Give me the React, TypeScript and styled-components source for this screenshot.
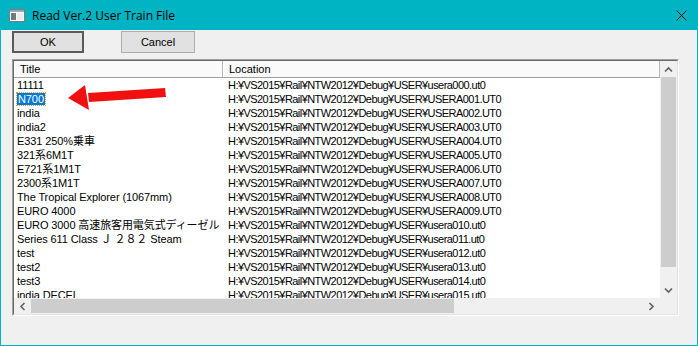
import React from "react";
import styled, { createGlobalStyle } from "styled-components";

const GlobalStyle = createGlobalStyle`
  html, body {
    margin: 0;
    padding: 0;
    background: #f0f0f0;
  }
  body {
    font-family: "Liberation Sans", "Noto Sans CJK JP", sans-serif;
  }
`;

const accent = "#00b4c4";
const uiFont = `"Liberation Sans", "Noto Sans CJK JP", sans-serif`;

const Window = styled.div`
  position: relative;
  width: 698px;
  height: 346px;
  box-sizing: border-box;
  border: 1px solid ${accent};
  border-top: none;
  background: #f0f0f0;
  display: flex;
  flex-direction: column;
  overflow: hidden;
`;

const TitleBar = styled.div`
  height: 30px;
  flex: none;
  background: ${accent};
  display: flex;
  flex-direction: row;
  align-items: center;
  padding: 0 10px 0 8px;
  gap: 7px;
  .caption {
    flex: 1;
    font-family: "Open Sans", "Noto Sans", sans-serif;
    font-size: 12px;
    color: #000;
    padding-top: 1px;
  }
  .close {
    display: flex;
  }
`;

const Body = styled.div`
  flex: 1;
  display: flex;
  flex-direction: column;
  padding: 1px 0 0 11px;
`;

const ButtonRow = styled.div`
  display: flex;
  flex-direction: row;
  gap: 37px;
`;

const Button = styled.button<{ $default?: boolean }>`
  width: ${({ $default }) => ($default ? 72 : 74)}px;
  height: 22px;
  box-sizing: border-box;
  margin: 0;
  padding: 0;
  background: #e1e1e1;
  border: ${({ $default }) =>
    $default ? "2px solid #5a5a5a" : "1px solid #adadad"};
  font-family: ${uiFont};
  font-size: 11px;
  color: #000;
`;

const ListView = styled.div`
  margin-top: 6px;
  width: 667px;
  height: 257px;
  box-sizing: border-box;
  border-style: solid;
  border-width: 1px;
  border-color: #a0a0a0 #ffffff #ffffff #a0a0a0;
  display: flex;
`;

const ListInner = styled.div`
  flex: 1;
  border-style: solid;
  border-width: 1px;
  border-color: #696969 #e3e3e3 #e3e3e3 #696969;
  display: grid;
  grid-template-columns: 1fr 17px;
  grid-template-rows: 1fr 16px;
  background: #fff;
  min-width: 0;
`;

const Content = styled.div`
  overflow: hidden;
  display: flex;
  flex-direction: column;
  min-width: 0;
`;

const HeaderRow = styled.div`
  display: flex;
  flex-direction: row;
  height: 17px;
  box-sizing: border-box;
  flex: none;
  background: #fafafa;
  border-bottom: 1px solid #a0a0a0;
`;

const HeaderCell = styled.div<{ $width?: number }>`
  ${({ $width }) => ($width ? `width: ${$width}px;` : "flex: 1;")}
  flex-shrink: 0;
  box-sizing: border-box;
  padding-left: 5px;
  font-family: ${uiFont};
  font-size: 11px;
  line-height: 16px;
  color: #000;
  border-right: 1px solid #b8b8b8;
  border-left: 1px solid #ffffff;
`;

const Row = styled.div`
  display: flex;
  flex-direction: row;
  height: 14px;
  flex: none;
`;

const Cell = styled.div<{ $width?: number; $tight?: boolean }>`
  ${({ $width }) => ($width ? `width: ${$width}px;` : "flex: 1;")}
  flex-shrink: 0;
  box-sizing: border-box;
  padding-left: ${({ $tight }) => ($tight ? 5 : 3)}px;
  font-family: ${uiFont};
  font-size: 11px;
  line-height: 14px;
  letter-spacing: ${({ $tight }) => ($tight ? "-0.55px" : "-0.1px")};
  white-space: nowrap;
  overflow: hidden;
  color: #000;
`;

const Selected = styled.span`
  display: inline-block;
  background: #0078d7;
  color: #fff;
  line-height: 12px;
  padding: 0 1px;
  outline: 1px dotted #f0a030;
`;

const ScrollV = styled.div`
  background: #f0f0f0;
  display: flex;
  flex-direction: column;
  .thumb {
    margin: 0 1px;
    height: 190px;
    background: #cdcdcd;
  }
  .fill {
    flex: 1;
  }
`;

const ScrollH = styled.div`
  background: #f0f0f0;
  display: flex;
  flex-direction: row;
  .thumb {
    margin: 1px 0;
    width: 423px;
    background: #cdcdcd;
  }
  .fill {
    flex: 1;
  }
`;

const ArrowBtn = styled.div`
  width: 17px;
  height: 16px;
  flex: none;
  display: flex;
  align-items: center;
  justify-content: center;
`;

const Corner = styled.div`
  background: #f0f0f0;
`;

const Annotation = styled.svg`
  position: absolute;
  left: 0;
  top: 0;
  pointer-events: none;
`;

const prefix = "H:¥VS2015¥Rail¥NTW2012¥Debug¥USER¥";

const rows: [string, string][] = [
  ["11111", "usera000.ut0"],
  ["N700", "USERA001.UT0"],
  ["india", "USERA002.UT0"],
  ["india2", "USERA003.UT0"],
  ["E331 250%乗車", "USERA004.UT0"],
  ["321系6M1T", "USERA005.UT0"],
  ["E721系1M1T", "USERA006.UT0"],
  ["2300系1M1T", "USERA007.UT0"],
  ["The Tropical Explorer (1067mm)", "USERA008.UT0"],
  ["EURO 4000", "USERA009.UT0"],
  ["EURO 3000 高速旅客用電気式ディーゼル", "usera010.ut0"],
  ["Series 611 Class Ｊ ２８２ Steam", "usera011.ut0"],
  ["test", "usera012.ut0"],
  ["test2", "usera013.ut0"],
  ["test3", "usera014.ut0"],
  ["india DECEL", "usera015.ut0"],
];

const Chevron = ({ dir }: { dir: "up" | "down" | "left" | "right" }) => {
  const rot = { up: 0, right: 90, down: 180, left: 270 }[dir];
  return (
    <svg width="9" height="9" viewBox="0 0 9 9">
      <path
        d="M1 6.5 L4.5 3 L8 6.5"
        fill="none"
        stroke="#606060"
        strokeWidth="1.6"
        transform={`rotate(${rot} 4.5 4.5)`}
      />
    </svg>
  );
};

const AppIcon = () => (
  <svg width="16" height="13" viewBox="0 0 16 13">
    <rect x="0.5" y="0.5" width="15" height="12" fill="#fff" stroke="#7a7a7a" />
    <rect x="1" y="1" width="14" height="2" fill="#9aa8b8" />
    <rect x="2" y="4" width="5" height="7" fill="#6d7a80" />
    <rect x="8" y="4" width="6" height="7" fill="#e8eef0" />
  </svg>
);

export default function App() {
  return (
    <>
      <GlobalStyle />
      <Window>
        <TitleBar>
          <AppIcon />
          <div className="caption">Read Ver.2 User Train File</div>
          <div className="close">
            <svg width="11" height="11" viewBox="0 0 11 11">
              <path d="M0.5 0.5 L10.5 10.5 M10.5 0.5 L0.5 10.5" stroke="#000" strokeWidth="1" />
            </svg>
          </div>
        </TitleBar>
        <Body>
          <ButtonRow>
            <Button $default>OK</Button>
            <Button>Cancel</Button>
          </ButtonRow>
          <ListView>
            <ListInner>
              <Content>
                <HeaderRow>
                  <HeaderCell $width={209}>Title</HeaderCell>
                  <HeaderCell>Location</HeaderCell>
                </HeaderRow>
                {rows.map(([title, file], i) => (
                  <Row key={i}>
                    <Cell $width={209}>
                      {i === 1 ? <Selected>{title}</Selected> : title}
                    </Cell>
                    <Cell $tight>{prefix + file}</Cell>
                  </Row>
                ))}
              </Content>
              <ScrollV>
                <ArrowBtn>
                  <Chevron dir="up" />
                </ArrowBtn>
                <div className="thumb" />
                <div className="fill" />
                <ArrowBtn>
                  <Chevron dir="down" />
                </ArrowBtn>
              </ScrollV>
              <ScrollH>
                <ArrowBtn>
                  <Chevron dir="left" />
                </ArrowBtn>
                <div className="thumb" />
                <div className="fill" />
                <ArrowBtn>
                  <Chevron dir="right" />
                </ArrowBtn>
              </ScrollH>
              <Corner />
            </ListInner>
          </ListView>
        </Body>
        <Annotation width="698" height="346" viewBox="0 0 698 346">
          <polygon points="164,88 165,97 88,102 87,93" fill="#f01010" />
          <polygon points="67,98 84,85 88,110" fill="#f01010" />
        </Annotation>
      </Window>
    </>
  );
}
